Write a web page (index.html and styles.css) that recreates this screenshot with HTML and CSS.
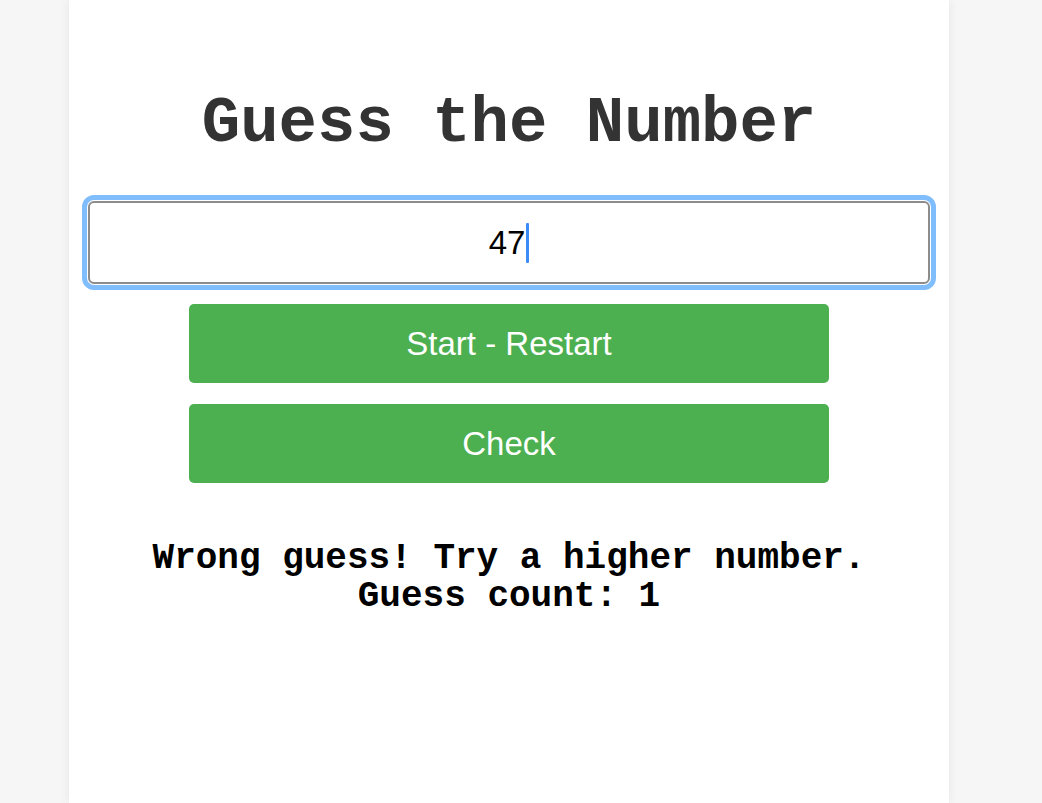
FILE: index.html
```html
<!DOCTYPE html>
<html lang="en">
<head>
<meta charset="utf-8">
<title>Guess the Number</title>
<link rel="stylesheet" href="styles.css">
</head>
<body>
<div class="page">
  <main class="card">
    <h1 class="title">Guess the Number</h1>
    <div class="field" role="textbox"><span class="value">47</span><span class="caret"></span></div>
    <div class="actions">
      <button class="btn">Start - Restart</button>
      <button class="btn">Check</button>
    </div>
    <p class="result">Wrong guess! Try a higher number.<br>Guess count: 1</p>
  </main>
</div>
</body>
</html>
```

FILE: styles.css
```css
html, body {
  margin: 0;
  padding: 0;
  height: 100%;
  background: #f6f6f6;
}
.page {
  height: 100%;
  padding-left: 69px;
  box-sizing: border-box;
}
.card {
  width: 880px;
  height: 100%;
  background: #fff;
  box-shadow: 0 0 10px rgba(0, 0, 0, 0.07);
  box-sizing: border-box;
  padding: 86px 19px 0 19px;
  display: flex;
  flex-direction: column;
  align-items: center;
}
.title {
  margin: 0;
  font-family: "Liberation Mono", "Courier New", monospace;
  font-weight: bold;
  font-size: 64px;
  line-height: 76px;
  color: #333;
}
.field {
  margin-top: 39px;
  width: 100%;
  height: 83px;
  box-sizing: border-box;
  border: 2px solid #8c8c8c;
  border-radius: 6px;
  outline: 5px solid #80bdfc;
  outline-offset: 1px;
  display: flex;
  align-items: center;
  justify-content: center;
  font-family: "Liberation Sans", Arial, sans-serif;
  font-size: 33px;
  color: #000;
}
.caret {
  display: inline-block;
  width: 3px;
  height: 40px;
  background: #3b8cf7;
  border-radius: 1px;
  margin-left: 1px;
}
.actions {
  margin-top: 20px;
  display: flex;
  flex-direction: column;
  gap: 21px;
}
.btn {
  width: 640px;
  height: 79px;
  border: none;
  border-radius: 5px;
  background: #4caf50;
  color: #fff;
  font-family: "Liberation Sans", Arial, sans-serif;
  font-size: 33px;
  padding: 0;
}
.result {
  margin: 57px 0 0;
  text-align: center;
  font-family: "Liberation Mono", "Courier New", monospace;
  font-weight: bold;
  font-size: 36px;
  line-height: 38px;
  color: #000;
}
```
